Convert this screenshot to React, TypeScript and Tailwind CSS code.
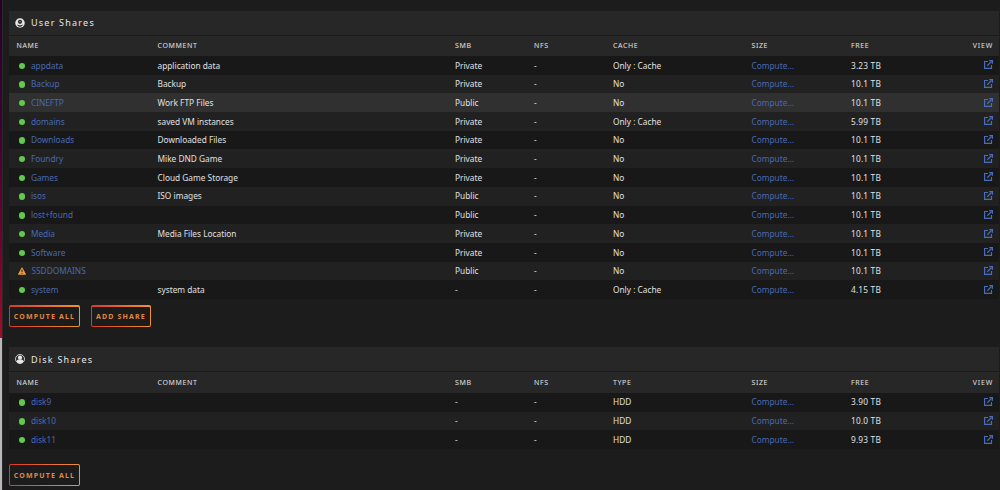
import type { ReactNode } from "react";
import { clsx } from "clsx";

type Share = {
  name: string;
  comment?: string;
  smb: string;
  kind: string;
  free: string;
  warn?: boolean;
  active?: boolean;
};

const userShares: Share[] = [
  { name: "appdata", comment: "application data", smb: "Private", kind: "Only : Cache", free: "3.23 TB" },
  { name: "Backup", comment: "Backup", smb: "Private", kind: "No", free: "10.1 TB" },
  { name: "CINEFTP", comment: "Work FTP Files", smb: "Public", kind: "No", free: "10.1 TB", active: true },
  { name: "domains", comment: "saved VM instances", smb: "Private", kind: "Only : Cache", free: "5.99 TB" },
  { name: "Downloads", comment: "Downloaded Files", smb: "Private", kind: "No", free: "10.1 TB" },
  { name: "Foundry", comment: "Mike DND Game", smb: "Private", kind: "No", free: "10.1 TB" },
  { name: "Games", comment: "Cloud Game Storage", smb: "Private", kind: "No", free: "10.1 TB" },
  { name: "isos", comment: "ISO images", smb: "Public", kind: "No", free: "10.1 TB" },
  { name: "lost+found", smb: "Public", kind: "No", free: "10.1 TB" },
  { name: "Media", comment: "Media Files Location", smb: "Private", kind: "No", free: "10.1 TB" },
  { name: "Software", smb: "Private", kind: "No", free: "10.1 TB" },
  { name: "SSDDOMAINS", smb: "Public", kind: "No", free: "10.1 TB", warn: true },
  { name: "system", comment: "system data", smb: "-", kind: "Only : Cache", free: "4.15 TB" },
];

const diskShares: Share[] = [
  { name: "disk9", smb: "-", kind: "HDD", free: "3.90 TB" },
  { name: "disk10", smb: "-", kind: "HDD", free: "10.0 TB" },
  { name: "disk11", smb: "-", kind: "HDD", free: "9.93 TB" },
];

const columns =
  "grid grid-cols-[140.5px_297.5px_79px_79px_138.5px_99.5px_1fr] items-center pl-2 pr-[6px]";

function UserRing() {
  return (
    <svg viewBox="0 0 20 20" className="h-[10px] w-[10px]">
      <circle cx="10" cy="10" r="9.5" fill="#e6e6e6" />
      <circle cx="10" cy="7.6" r="4.2" fill="#272727" />
      <path d="M4.2 12.5c1.2 1.4 3.2 2 5.8 2s4.6-.6 5.8-2c-.3 3-2.6 5-5.8 5s-5.5-2-5.8-5z" fill="#272727" />
      <circle cx="10" cy="7.2" r="1.8" fill="#777" />
    </svg>
  );
}

function UserSolid() {
  return (
    <svg viewBox="0 0 20 20" className="h-[10px] w-[10px]">
      <circle cx="10" cy="10" r="9" fill="none" stroke="#e6e6e6" strokeWidth="1.7" />
      <circle cx="10" cy="7.5" r="4.3" fill="#e6e6e6" />
      <path d="M3 15c.6-2.7 2.2-3.8 4.3-4 1.6 1 3.8 1 5.4 0 2.1.2 3.7 1.3 4.3 4-3.3 5-10.7 5-14 0z" fill="#e6e6e6" />
    </svg>
  );
}

function OpenIcon() {
  return (
    <svg viewBox="0 0 18 18" className="-mt-[2px] h-[9px] w-[9px]" fill="none" stroke="#486dba" strokeWidth="2.4">
      <path d="M8 3H1.2v13.8H15V10M6.5 11.5 15 3" />
      <path d="M10.5 1.2h6.3v6.3" strokeWidth="2.8" />
    </svg>
  );
}

function WarnIcon() {
  return (
    <svg viewBox="0 0 16 16" className="-ml-px mr-[5.5px] h-2 w-2">
      <path d="M8 1.5 15 14.5H1z" fill="#e99a42" stroke="#e99a42" strokeWidth="2" strokeLinejoin="round" />
      <path d="M8 5v5M8 11.5v2" stroke="#222" strokeWidth="2" />
    </svg>
  );
}

function Button({ children, className }: { children: ReactNode; className: string }) {
  return (
    <button
      className={clsx(
        "h-[22px] rounded-[2px] bg-[linear-gradient(90deg,#dc3928,#f29435)] p-[1.2px] text-[7px] font-bold tracking-[1.16px] text-[#e08840]",
        className,
      )}
    >
      <span className="flex h-full items-center justify-center whitespace-nowrap rounded-[1px] bg-[#1c1c1c] pt-px">
        {children}
      </span>
    </button>
  );
}

function Shares({ title, icon, kind, shares }: { title: string; icon: ReactNode; kind: string; shares: Share[] }) {
  return (
    <section className="whitespace-nowrap">
      <h2 className="flex h-[25px] items-center border-b border-[#1b1b1b] bg-[#272727] pl-[6px] text-[9px] tracking-[1.22px] text-[#e6e6e6]">
        {icon}
        <span className="ml-[6px]">{title}</span>
      </h2>
      <div className={clsx(columns, "h-[20.5px] bg-[#272727] pt-[1.4px] text-[7px] tracking-[0.62px] text-[#e0e0e0]")}>
        <span className="-ml-[0.5px]">NAME</span>
        <span>COMMENT</span>
        <span>SMB</span>
        <span>NFS</span>
        <span>{kind}</span>
        <span>SIZE</span>
        <div className="flex justify-between">
          <span>FREE</span>
          <span className="tracking-[0.8px]">VIEW</span>
        </div>
      </div>
      <div>
        {shares.map((share) => (
          <div
            key={share.name}
            className={clsx(
              columns,
              "h-[18.7px] pt-px text-[8.3px] text-[#e0e0e0]",
              share.active ? "bg-[#303030]" : "odd:bg-[#181818] even:bg-[#212121]",
            )}
          >
            <span className="flex items-center pl-[2px] text-[#4869b2]">
              {share.warn ? <WarnIcon /> : <span className="mr-[5.5px] h-[6.4px] w-[6.4px] rounded-full bg-[#61c94b]" />}
              {share.name}
            </span>
            <span>{share.comment}</span>
            <span>{share.smb}</span>
            <span>-</span>
            <span>{share.kind}</span>
            <span className="text-[#4869b2]">Compute...</span>
            <div className="flex items-center justify-between">
              <span className="tracking-[0.2px]">{share.free}</span>
              <OpenIcon />
            </div>
          </div>
        ))}
      </div>
    </section>
  );
}

export default function App() {
  return (
    <div className="flex h-[490px] w-[1000px] overflow-hidden bg-[#1c1c1c] font-['Noto_Sans',sans-serif]">
      <div className="flex w-[2px] flex-col">
        <div className="h-[338px] bg-[linear-gradient(#26002b,#3c0035_35%,#780030_75%,#a80b28)]" />
        <div className="flex-1 bg-[#b8b8b8]" />
      </div>
      <div className="w-px bg-[#292929]" />
      <main className="flex-1 pl-[6px] pr-px pt-[10.5px]">
        <Shares title="User Shares" icon={<UserRing />} kind="CACHE" shares={userShares} />
        <div className="flex gap-[11px] pb-[20px] pt-[6.4px]">
          <Button className="w-[71px]">COMPUTE ALL</Button>
          <Button className="w-[60px]">ADD SHARE</Button>
        </div>
        <Shares title="Disk Shares" icon={<UserSolid />} kind="TYPE" shares={diskShares} />
        <div className="flex pt-[15.4px]">
          <Button className="w-[71px]">COMPUTE ALL</Button>
        </div>
      </main>
    </div>
  );
}
